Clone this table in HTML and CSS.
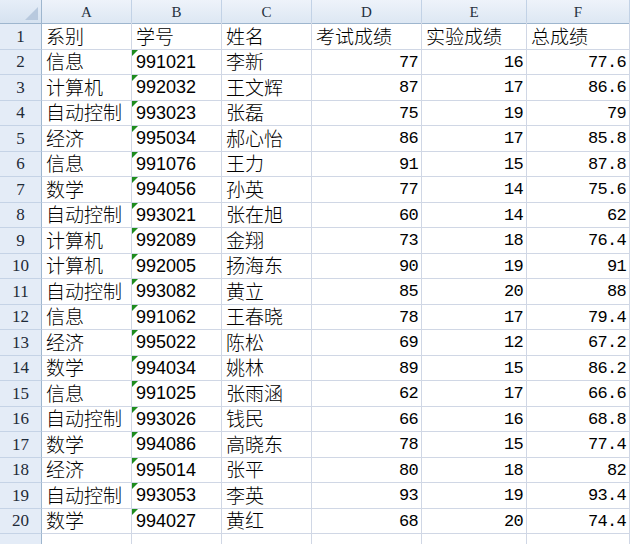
FILE: index.html
```html
<!DOCTYPE html>
<html lang="zh">
<head>
<meta charset="utf-8">
<link rel="stylesheet" href="styles.css">
</head>
<body>
<div class="sheet">
  <div class="corner"><span class="tri"></span></div>
  <div class="ch">A</div><div class="ch">B</div><div class="ch">C</div><div class="ch">D</div><div class="ch">E</div><div class="ch">F</div>

  <div class="rh">1</div><div class="c t">系别</div><div class="c t">学号</div><div class="c t">姓名</div><div class="c t">考试成绩</div><div class="c t">实验成绩</div><div class="c t">总成绩</div>
  <div class="rh">2</div><div class="c t">信息</div><div class="c id">991021</div><div class="c t">李新</div><div class="c n">77</div><div class="c n">16</div><div class="c n">77.6</div>
  <div class="rh">3</div><div class="c t">计算机</div><div class="c id">992032</div><div class="c t">王文辉</div><div class="c n">87</div><div class="c n">17</div><div class="c n">86.6</div>
  <div class="rh">4</div><div class="c t">自动控制</div><div class="c id">993023</div><div class="c t">张磊</div><div class="c n">75</div><div class="c n">19</div><div class="c n">79</div>
  <div class="rh">5</div><div class="c t">经济</div><div class="c id">995034</div><div class="c t">郝心怡</div><div class="c n">86</div><div class="c n">17</div><div class="c n">85.8</div>
  <div class="rh">6</div><div class="c t">信息</div><div class="c id">991076</div><div class="c t">王力</div><div class="c n">91</div><div class="c n">15</div><div class="c n">87.8</div>
  <div class="rh">7</div><div class="c t">数学</div><div class="c id">994056</div><div class="c t">孙英</div><div class="c n">77</div><div class="c n">14</div><div class="c n">75.6</div>
  <div class="rh">8</div><div class="c t">自动控制</div><div class="c id">993021</div><div class="c t">张在旭</div><div class="c n">60</div><div class="c n">14</div><div class="c n">62</div>
  <div class="rh">9</div><div class="c t">计算机</div><div class="c id">992089</div><div class="c t">金翔</div><div class="c n">73</div><div class="c n">18</div><div class="c n">76.4</div>
  <div class="rh">10</div><div class="c t">计算机</div><div class="c id">992005</div><div class="c t">扬海东</div><div class="c n">90</div><div class="c n">19</div><div class="c n">91</div>
  <div class="rh">11</div><div class="c t">自动控制</div><div class="c id">993082</div><div class="c t">黄立</div><div class="c n">85</div><div class="c n">20</div><div class="c n">88</div>
  <div class="rh">12</div><div class="c t">信息</div><div class="c id">991062</div><div class="c t">王春晓</div><div class="c n">78</div><div class="c n">17</div><div class="c n">79.4</div>
  <div class="rh">13</div><div class="c t">经济</div><div class="c id">995022</div><div class="c t">陈松</div><div class="c n">69</div><div class="c n">12</div><div class="c n">67.2</div>
  <div class="rh">14</div><div class="c t">数学</div><div class="c id">994034</div><div class="c t">姚林</div><div class="c n">89</div><div class="c n">15</div><div class="c n">86.2</div>
  <div class="rh">15</div><div class="c t">信息</div><div class="c id">991025</div><div class="c t">张雨涵</div><div class="c n">62</div><div class="c n">17</div><div class="c n">66.6</div>
  <div class="rh">16</div><div class="c t">自动控制</div><div class="c id">993026</div><div class="c t">钱民</div><div class="c n">66</div><div class="c n">16</div><div class="c n">68.8</div>
  <div class="rh">17</div><div class="c t">数学</div><div class="c id">994086</div><div class="c t">高晓东</div><div class="c n">78</div><div class="c n">15</div><div class="c n">77.4</div>
  <div class="rh">18</div><div class="c t">经济</div><div class="c id">995014</div><div class="c t">张平</div><div class="c n">80</div><div class="c n">18</div><div class="c n">82</div>
  <div class="rh">19</div><div class="c t">自动控制</div><div class="c id">993053</div><div class="c t">李英</div><div class="c n">93</div><div class="c n">19</div><div class="c n">93.4</div>
  <div class="rh">20</div><div class="c t">数学</div><div class="c id">994027</div><div class="c t">黄红</div><div class="c n">68</div><div class="c n">20</div><div class="c n">74.4</div>
  <div class="rh"></div><div class="c"></div><div class="c"></div><div class="c"></div><div class="c"></div><div class="c"></div><div class="c"></div>
</div>
</body>
</html>
```
FILE: styles.css
```css
html, body {
  margin: 0;
  padding: 0;
  background: #ffffff;
}
body {
  width: 630px;
  height: 544px;
  overflow: hidden;
}
.sheet {
  display: grid;
  grid-template-columns: 42px 90px 90px 90px 110px 105px 103px;
  grid-template-rows: 24px;
  grid-auto-rows: 25.5px;
  font-family: "Noto Sans CJK SC", sans-serif;
  color: #000;
}
.corner {
  position: relative;
  background: linear-gradient(#e6eef8, #d6e2f0);
  border-right: 1px solid #9eb6ce;
  border-bottom: 1px solid #9eb6ce;
  box-sizing: border-box;
}
.tri {
  position: absolute;
  right: 3px;
  bottom: 3px;
  width: 0;
  height: 0;
  border-left: 13px solid transparent;
  border-bottom: 13px solid #b8c9de;
}
.ch {
  background: linear-gradient(#eef3fa, #dde7f3);
  border-right: 1px solid #c2d2e6;
  border-bottom: 1px solid #9eb6ce;
  box-sizing: border-box;
  display: flex;
  align-items: center;
  justify-content: center;
  font-family: "Liberation Serif", serif;
  font-size: 15px;
  color: #27313e;
  padding-top: 1px;
}
.rh {
  background: #e4ecf7;
  border-right: 1px solid #9eb6ce;
  border-bottom: 1px solid #c5d3e6;
  box-sizing: border-box;
  display: flex;
  align-items: center;
  justify-content: center;
  font-family: "Liberation Serif", serif;
  font-size: 17px;
  color: #1e2a38;
  padding-top: 1px;
}
.c {
  position: relative;
  border-right: 1px solid #d0d7e5;
  border-bottom: 1px solid #d0d7e5;
  box-sizing: border-box;
  display: flex;
  align-items: center;
  padding: 0 3px 0 3px;
  white-space: nowrap;
  overflow: hidden;
}
.t {
  font-family: "Noto Sans CJK SC", sans-serif;
  font-size: 19px;
  font-weight: 300;
  line-height: 1;
  padding-left: 4px;
  padding-top: 0;
  margin-top: -2px;
}
.id {
  font-family: "Liberation Sans", sans-serif;
  font-size: 18px;
  padding-left: 4px;
  padding-top: 1px;
}
.id::before {
  content: "";
  position: absolute;
  left: 0;
  top: 0;
  width: 0;
  height: 0;
  border-top: 6px solid #1e8c1e;
  border-right: 6px solid transparent;
}
.n {
  justify-content: flex-end;
  font-family: "Liberation Mono", monospace;
  font-size: 17px;
  letter-spacing: -0.7px;
  padding-right: 3px;
  padding-top: 1px;
}
```
